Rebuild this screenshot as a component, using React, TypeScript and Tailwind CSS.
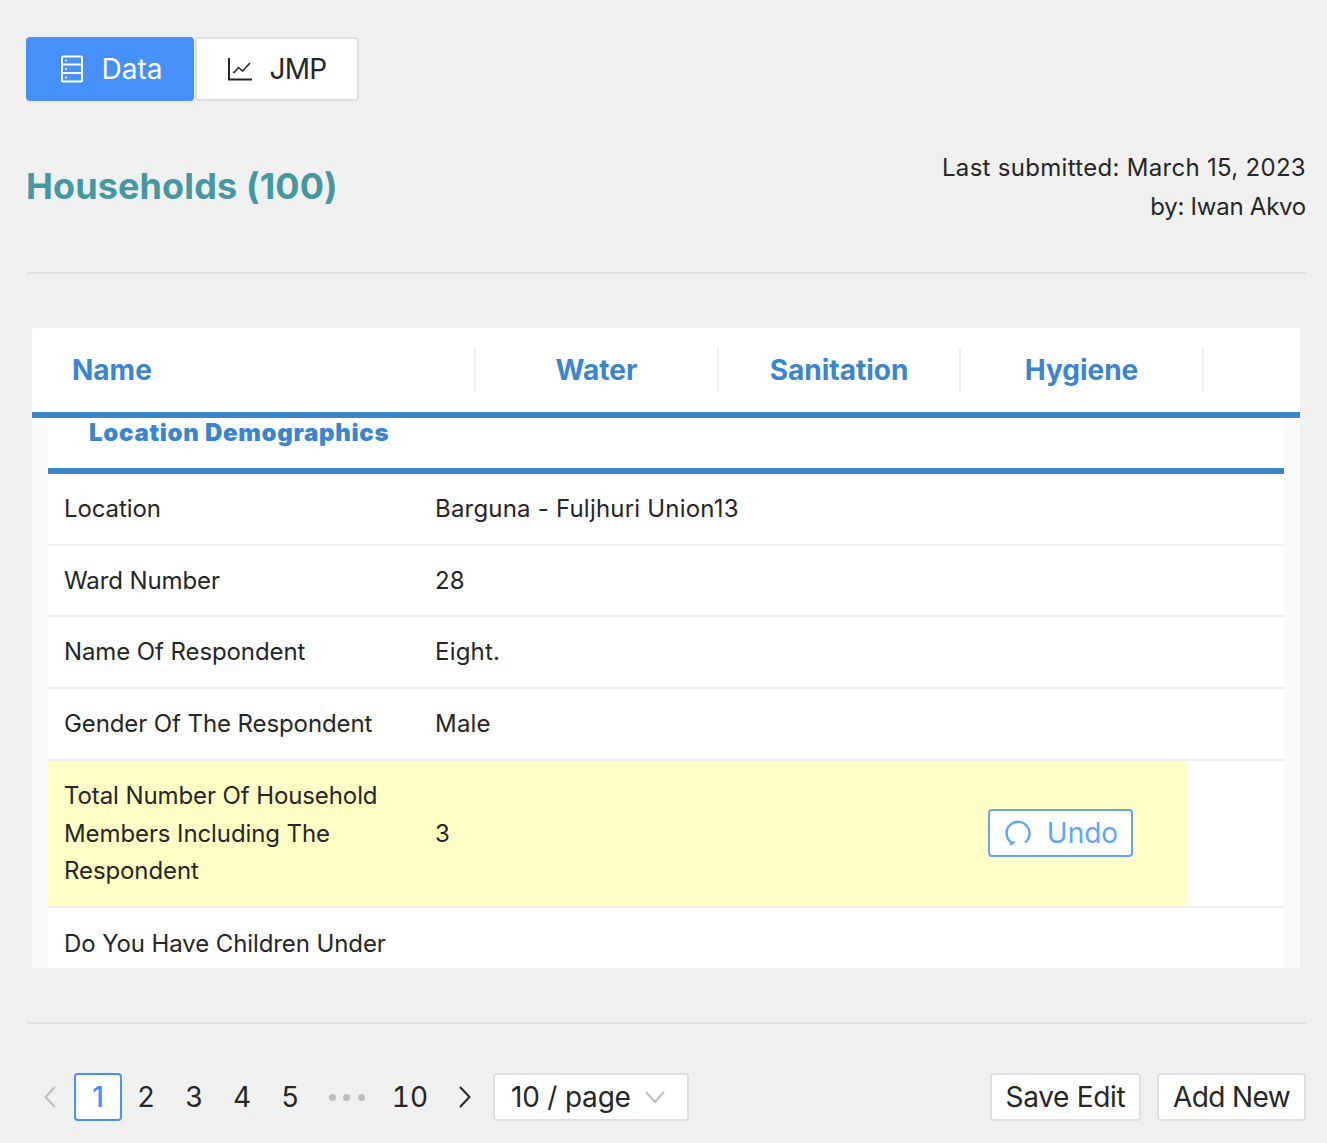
const rows = [
  { name: "Location", value: "Barguna - Fuljhuri Union13" },
  { name: "Ward Number", value: "28" },
  { name: "Name Of Respondent", value: "Eight." },
  { name: "Gender Of The Respondent", value: "Male" },
];

function DatabaseIcon() {
  return (
    <svg width="24" height="28" viewBox="0 0 24 28" fill="none" stroke="currentColor" strokeWidth="2">
      <rect x="2" y="1.5" width="20" height="25" rx="1" />
      <path d="M2 9.5h20M2 18h20" />
      <circle cx="6" cy="5.5" r="1" fill="currentColor" stroke="none" />
      <circle cx="6" cy="14" r="1" fill="currentColor" stroke="none" />
      <circle cx="6" cy="22.5" r="1" fill="currentColor" stroke="none" />
    </svg>
  );
}

function ChartIcon() {
  return (
    <svg width="24" height="24" viewBox="0 0 24 24" fill="none" stroke="#262626" strokeWidth="2">
      <path d="M1 1v21.5h23" />
      <path d="M5.5 16l5-5.5 4 3.5 7.5-8" strokeWidth="1.6" />
    </svg>
  );
}

function UndoIcon() {
  return (
    <svg width="26" height="26" viewBox="0 0 26 26" fill="none" stroke="currentColor" strokeWidth="2.4">
      <path d="M5 21.5A11.5 11.5 0 1 1 20 22.5" />
      <path d="M4.5 20.5l6.5 1.5-5.5 4z" fill="currentColor" stroke="none" />
    </svg>
  );
}

function Chevron({ d }: { d: string }) {
  return (
    <svg width="12" height="22" viewBox="0 0 12 22" fill="none" stroke="currentColor" strokeWidth="2">
      <path d={d} />
    </svg>
  );
}

function PageNumber({ label }: { label: string }) {
  return <span className="flex h-12 w-12 items-center justify-center">{label}</span>;
}

export default function App() {
  return (
    <div className="h-[1143px] overflow-hidden bg-[#f0f0f0] pt-[37px] pr-[21px] pl-[26px] font-['Inter',sans-serif] text-[#262626]">
      <div className="flex h-16 gap-px">
        <button className="flex w-[168px] items-center justify-center gap-[18px] rounded bg-[#4590f9] pl-[2px] text-[28px] text-white shadow-[0_3px_0_rgba(0,0,0,0.02)]">
          <DatabaseIcon />
          Data
        </button>
        <button className="flex w-[164px] items-center justify-center gap-[17px] rounded border-2 border-[#dedede] bg-white pl-[1px] text-[28px] tracking-[-0.7px]">
          <ChartIcon />
          JMP
        </button>
      </div>

      <div className="mt-[49px] flex h-[76px] items-start justify-between">
        <h1 className="mt-[13px] text-[36px] leading-[46px] font-bold tracking-[0.12px] text-[#45989f]">
          Households (100)
        </h1>
        <div className="-mt-[2px] text-right text-[24px] leading-[39px]">
          <div className="tracking-[0.3px]">Last submitted: March 15, 2023</div>
          <div className="tracking-[-0.25px]">by: Iwan Akvo</div>
        </div>
      </div>

      <hr className="mt-[46px] border-t-2 border-[#e3e3e3]" />

      <div className="mt-[54px] mr-[6px] ml-[6px] h-[640px] overflow-hidden rounded-t bg-[#fafafa]">
        <div className="flex h-[84px] items-center bg-white text-[28px] font-bold text-[#3b85cc]">
          <div className="h-11 w-[444px] border-r-2 border-[#efefef] pl-[40px] leading-[44px]">Name</div>
          <div className="h-11 w-[243px] border-r-2 border-[#efefef] text-center leading-[44px]">Water</div>
          <div className="h-11 w-[242px] border-r-2 border-[#efefef] text-center leading-[44px]">Sanitation</div>
          <div className="h-11 w-[243px] border-r-2 border-[#efefef] text-center leading-[44px]">Hygiene</div>
        </div>
        <div className="h-[6px] bg-[#3b85cc]" />
        <div className="mx-4 h-[550px] overflow-hidden bg-white">
          <div className="h-[50px] pl-[41px] text-[24px] leading-[30px] font-black tracking-[0.7px] text-[#3b85cc]">
            Location Demographics
          </div>
          <div className="h-[6px] bg-[#3b85cc]" />
          {rows.map((row) => (
            <div key={row.name} className="flex h-[71.7px] items-center border-b-2 border-[#efefef] text-[24px]">
              <div className="w-[387px] pl-4 tracking-[-0.1px]">{row.name}</div>
              <div className="tracking-[0.2px]">{row.value}</div>
            </div>
          ))}
          <div className="h-[147px] border-b-2 border-[#efefef]">
            <div className="flex h-[145px] w-[1139px] items-center bg-[#ffffc6] text-[24px] leading-[37.5px]">
              <div className="w-[387px] pl-4 tracking-[-0.1px]">
                Total Number Of Household
                <br />
                Members Including The
                <br />
                Respondent
              </div>
              <div className="w-[553px]">3</div>
              <button className="flex h-12 w-[145px] items-center justify-center gap-[16px] rounded border-2 border-[#5fa6f3] bg-white pl-[2px] text-[28px] text-[#5fa6f3]">
                <UndoIcon />
                Undo
              </button>
            </div>
          </div>
          <div className="pt-[17px] pl-4 text-[24px] leading-[37px] tracking-[-0.1px]">Do You Have Children Under</div>
        </div>
      </div>

      <hr className="mt-[54px] border-t-2 border-[#e3e3e3]" />

      <div className="mt-[49px] flex h-12 items-center justify-between text-[28px]">
        <div className="flex items-center">
          <span className="ml-[18px] text-[#bdbdbd]">
            <Chevron d="M11 1L1.5 11l9.5 10" />
          </span>
          <span className="ml-[18px] flex h-12 w-12 items-center justify-center rounded border-2 border-[#4590f9] bg-white font-medium text-[#4590f9]">
            1
          </span>
          <PageNumber label="2" />
          <PageNumber label="3" />
          <PageNumber label="4" />
          <PageNumber label="5" />
          <span className="flex w-[72px] justify-center gap-[7.5px] pr-[7px]">
            <span className="h-[7px] w-[7px] rounded-full bg-[#bdbdbd]" />
            <span className="h-[7px] w-[7px] rounded-full bg-[#bdbdbd]" />
            <span className="h-[7px] w-[7px] rounded-full bg-[#bdbdbd]" />
          </span>
          <span className="w-12 text-center [font-feature-settings:'tnum']">10</span>
          <span className="ml-[25px]">
            <Chevron d="M1 1l9.5 10L1 21" />
          </span>
          <div className="ml-[22px] flex h-12 w-[196px] items-center gap-[14px] rounded border-2 border-[#dedede] bg-white pl-[16px] tracking-[-0.2px]">
            10 / page
            <svg width="20" height="12" viewBox="0 0 20 12" fill="none" stroke="#bdbdbd" strokeWidth="2">
              <path d="M1 1l9 10 9-10" />
            </svg>
          </div>
        </div>
        <div className="flex gap-[16px] tracking-[-0.3px]">
          <button className="h-12 w-[151px] rounded border-2 border-[#dedede] bg-white">Save Edit</button>
          <button className="h-12 w-[149px] rounded border-2 border-[#dedede] bg-white tracking-[-0.6px]">Add New</button>
        </div>
      </div>
    </div>
  );
}
